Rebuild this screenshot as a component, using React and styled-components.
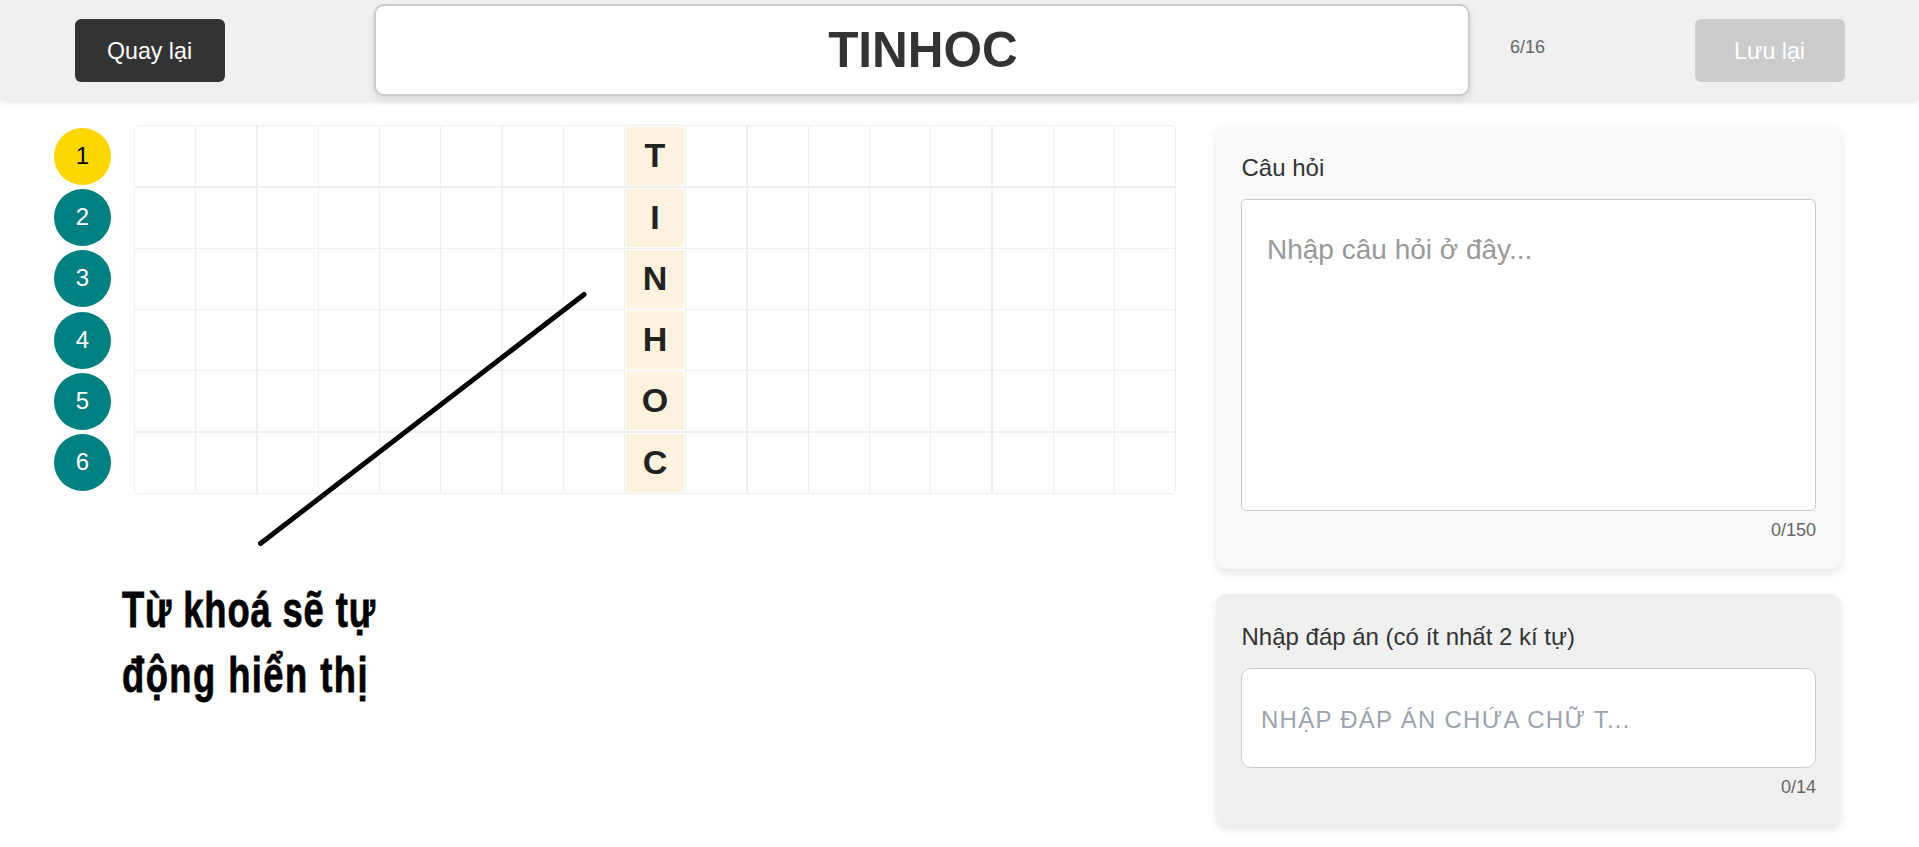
import React from 'react';
import styled, { createGlobalStyle } from 'styled-components';

const GlobalStyle = createGlobalStyle`
  * { box-sizing: border-box; }
  body { margin: 0; background: #fff; font-family: "Liberation Sans", Arial, sans-serif; color: #333; overflow: hidden; }
`;

const Page = styled.div`
  height: 847px;
  display: flex;
  flex-direction: column;
`;

const Header = styled.header`
  height: 100px;
  flex: none;
  display: flex;
  align-items: center;
  padding: 0 74px 0 75px;
  background: #f0f0f0;
  box-shadow: 0 2px 5px rgba(0, 0, 0, 0.1);
`;

const Button = styled.button`
  width: 150px;
  height: 63px;
  padding: 1px 1px 0 0;
  margin-top: 1px;
  border: 0;
  border-radius: 6.25px;
  font: 23.2px "Liberation Sans", sans-serif;
  color: #fff;
  background: ${(p) => (p.$muted ? '#ccc' : '#333')};
  margin-left: ${(p) => (p.$muted ? 'auto' : 0)};
`;

const Keyword = styled.input`
  width: 1096px;
  height: 92px;
  margin-left: 149px;
  padding: 0 0 2px 2px;
  border: 2px solid #ccc;
  border-radius: 10px;
  text-align: center;
  font: bold 49.5px "Liberation Sans", sans-serif;
  color: #333;
  background: #fff;
  box-shadow: 0 4px 8px rgba(0, 0, 0, 0.1);
`;

const HeaderCount = styled.span`
  margin: -6px 0 0 40px;
  font-size: 18px;
  color: #666;
`;

const Main = styled.main`
  flex: 1;
  display: flex;
  padding-top: 25px;
`;

const Board = styled.section`
  width: 1216px;
  flex: none;
  position: relative;
`;

const Puzzle = styled.div`
  display: flex;
  padding-left: 54px;
`;

const Numbers = styled.div`
  width: 80px;
  display: flex;
  flex-direction: column;
  gap: 4.2px;
  padding-top: 3px;
`;

const NumberBadge = styled.div`
  width: 57px;
  height: 57px;
  padding-bottom: 1px;
  border-radius: 50%;
  display: flex;
  align-items: center;
  justify-content: center;
  font-size: 24px;
  color: ${(p) => (p.$active ? '#000' : '#fff')};
  background: ${(p) => (p.$active ? '#ffd700' : '#008080')};
`;

const Grid = styled.div`
  width: 1042px;
  height: 369px;
  display: grid;
  grid-template-columns: repeat(4, 61px 62px 61px 61px) 61px;
  grid-template-rows: 62px 61px 61px 61px 62px 61px;
  border: solid #f0f0f0;
  border-width: 1px 0 0 1px;
  border-radius: 5px;
  overflow: hidden;
`;

const Cell = styled.div`
  border: solid #f0f0f0;
  border-width: 0 ${(p) => (p.$thickRight ? 2 : 1)}px ${(p) => (p.$thickBottom ? 2 : 1)}px 0;
  padding: 1px;
`;

const KeyCell = styled.div`
  height: 100%;
  padding-bottom: 2px;
  display: flex;
  align-items: center;
  justify-content: center;
  background: #fff2df;
  color: #222;
  font-size: 34px;
  line-height: 38px;
  font-weight: bold;
`;

const Pointer = styled.svg`
  position: absolute;
  left: 250px;
  top: 160px;
  width: 350px;
  height: 270px;
`;

const Note = styled.p`
  margin: 83px 0 0 122px;
  font: bold 50.5px/65px "Liberation Sans", sans-serif;
  color: #000;
  -webkit-text-stroke: 0.8px #000;
  white-space: nowrap;
  transform: scaleX(0.72);
  transform-origin: 0 0;
`;

const NoteLine = styled.span`
  display: block;
  letter-spacing: ${(p) => p.$spacing}px;
`;

const Side = styled.aside`
  width: 625px;
  display: flex;
  flex-direction: column;
  gap: 25px;
`;

const Card = styled.section`
  height: ${(p) => p.$height}px;
  padding: 25px;
  border-radius: 10px;
  background: ${(p) => p.$tone};
  box-shadow: 0 4px 8px rgba(0, 0, 0, 0.1);
`;

const Label = styled.label`
  display: block;
  height: 49px;
  padding-left: 0.5px;
  line-height: 36px;
  font-size: 24px;
`;

const Question = styled.textarea`
  display: block;
  width: 575px;
  height: 312px;
  padding: 32px 25px;
  border: 1px solid #ccc;
  border-radius: 5px;
  resize: none;
  font: 28px/36px "Liberation Sans", sans-serif;
  &::placeholder { color: #999; }
`;

const Answer = styled.input`
  display: block;
  width: 575px;
  height: 100px;
  padding: 3px 19px 0;
  border: 1px solid #ccc;
  border-radius: 10px;
  letter-spacing: 1.25px;
  font: 24px "Liberation Sans", sans-serif;
  &::placeholder { color: #9ca3af; }
`;

const Count = styled.div`
  margin-top: 6px;
  line-height: 26px;
  text-align: right;
  font-size: 18px;
  color: #666;
`;

const WORD = 'TINHOC';
const COLUMNS = 17;
const KEY_COLUMN = 8;

export default function App() {
  return (
    <Page>
      <GlobalStyle />
      <Header>
        <Button>Quay lại</Button>
        <Keyword defaultValue={WORD} />
        <HeaderCount>6/16</HeaderCount>
        <Button $muted>Lưu lại</Button>
      </Header>
      <Main>
        <Board>
          <Puzzle>
            <Numbers>
              {[...WORD].map((_, i) => (
                <NumberBadge key={i} $active={i === 0}>{i + 1}</NumberBadge>
              ))}
            </Numbers>
            <Grid>
              {[...WORD].map((letter, row) =>
                Array.from({ length: COLUMNS }, (_, col) => (
                  <Cell
                    key={`${row}-${col}`}
                    $thickRight={col % 4 === 1}
                    $thickBottom={row % 4 === 0}
                  >
                    {col === KEY_COLUMN && <KeyCell>{letter}</KeyCell>}
                  </Cell>
                ))
              )}
            </Grid>
          </Puzzle>
          <Pointer viewBox="0 0 350 270">
            <path d="M10.5 258.5L334 9.5" stroke="#000" strokeWidth="5" strokeLinecap="round" />
          </Pointer>
          <Note>
            <NoteLine $spacing={1.2}>Từ khoá sẽ tự</NoteLine>
            <NoteLine $spacing={2}>động hiển thị</NoteLine>
          </Note>
        </Board>
        <Side>
          <Card $height={444} $tone="#f9f9f9">
            <Label>Câu hỏi</Label>
            <Question placeholder="Nhập câu hỏi ở đây..." />
            <Count>0/150</Count>
          </Card>
          <Card $height={231} $tone="#f0f0f0">
            <Label>Nhập đáp án (có ít nhất 2 kí tự)</Label>
            <Answer placeholder="NHẬP ĐÁP ÁN CHỨA CHỮ T..." />
            <Count>0/14</Count>
          </Card>
        </Side>
      </Main>
    </Page>
  );
}
